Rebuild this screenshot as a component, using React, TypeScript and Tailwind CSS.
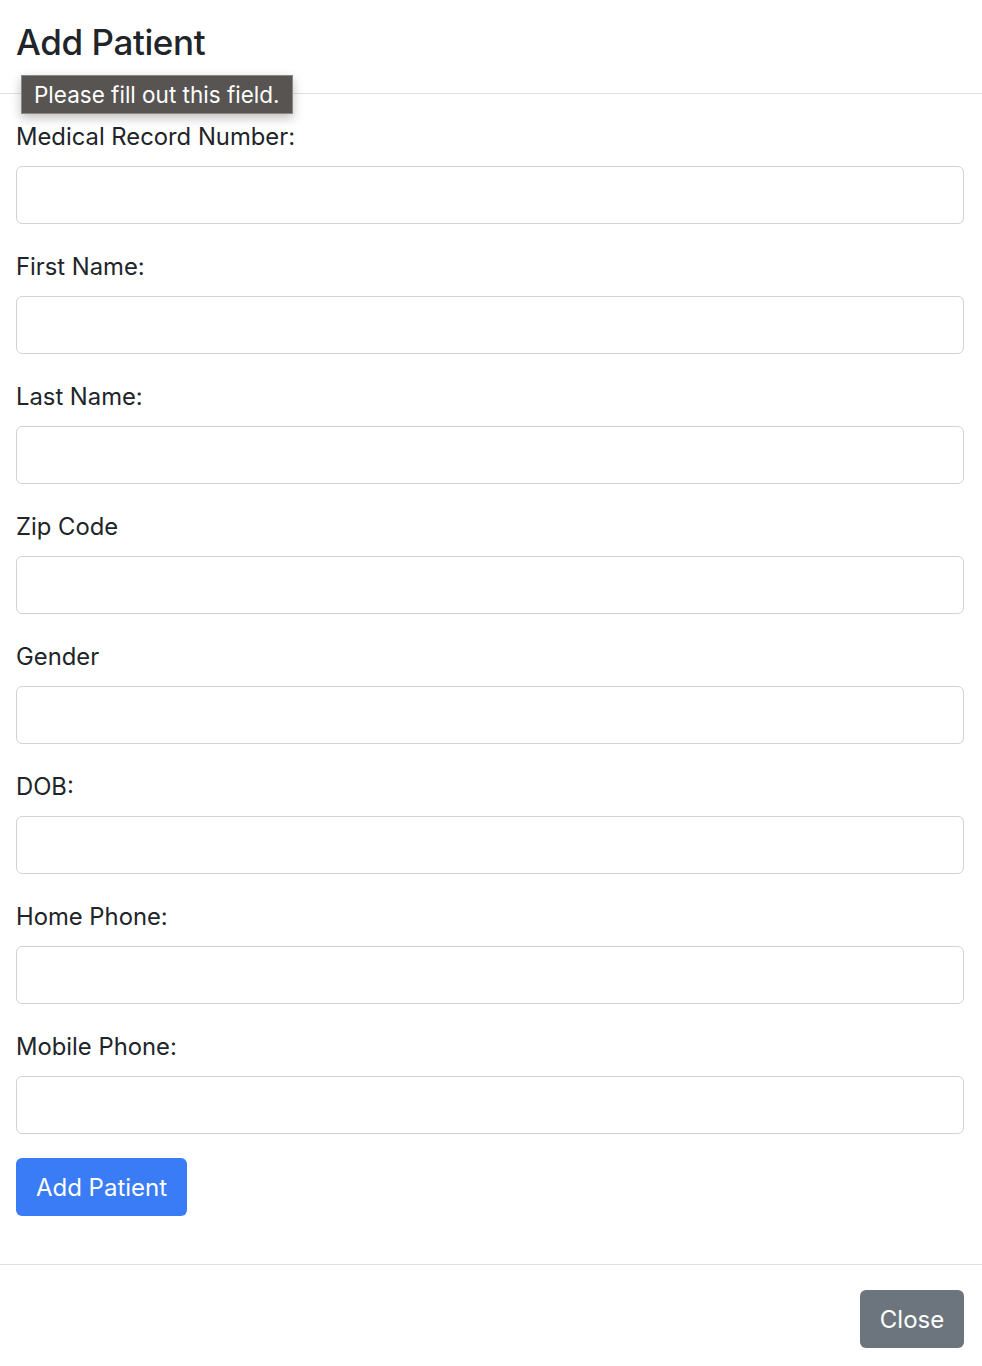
const fields = [
  "Medical Record Number:",
  "First Name:",
  "Last Name:",
  "Zip Code",
  "Gender",
  "DOB:",
  "Home Phone:",
  "Mobile Phone:",
];

export default function App() {
  return (
    <div
      className="relative min-h-[1366px] w-full bg-white text-[#212529]"
      style={{ fontFamily: "Inter, 'Noto Sans', sans-serif" }}
    >
      <div className="border-b border-[#dee2e6] pl-4 pr-[18px] py-6">
        <h5 className="text-[35px] leading-[45px] font-medium tracking-[-0.4px] -mt-[4px] mb-[4px]">Add Patient</h5>
      </div>

      <form className="pl-4 pr-[18px] pt-6 pb-12">
        {fields.map((label) => (
          <div key={label} className="mb-6">
            <label className="block mb-3 pt-[1px] h-[36px] text-[23.8px] leading-[36px]">{label}</label>
            <input
              required
              className="block w-full h-[58px] rounded-[6px] border border-[#cfd3d8] bg-white px-[18px] text-[22px] outline-none"
            />
          </div>
        ))}
        <button
          type="button"
          className="h-[58px] w-[171px] rounded-[6px] bg-[#3a7bf6] pt-[1px] text-[24px] text-white"
        >
          Add Patient
        </button>
      </form>

      <div className="flex justify-end border-t border-[#dee2e6] pl-4 pr-[18px] pt-[25px]">
        <button
          type="button"
          className="h-[58px] w-[104px] rounded-[6px] bg-[#6c757d] pt-[1px] text-[24px] text-white"
        >
          Close
        </button>
      </div>

      <div className="absolute left-[21px] top-[75px] flex h-[39px] w-[272px] items-center border border-[#8a8784] bg-[#575451] pl-[12px] text-[22.5px] text-white shadow-[0_4px_10px_rgba(0,0,0,0.25)]">
        Please fill out this field.
      </div>
    </div>
  );
}
